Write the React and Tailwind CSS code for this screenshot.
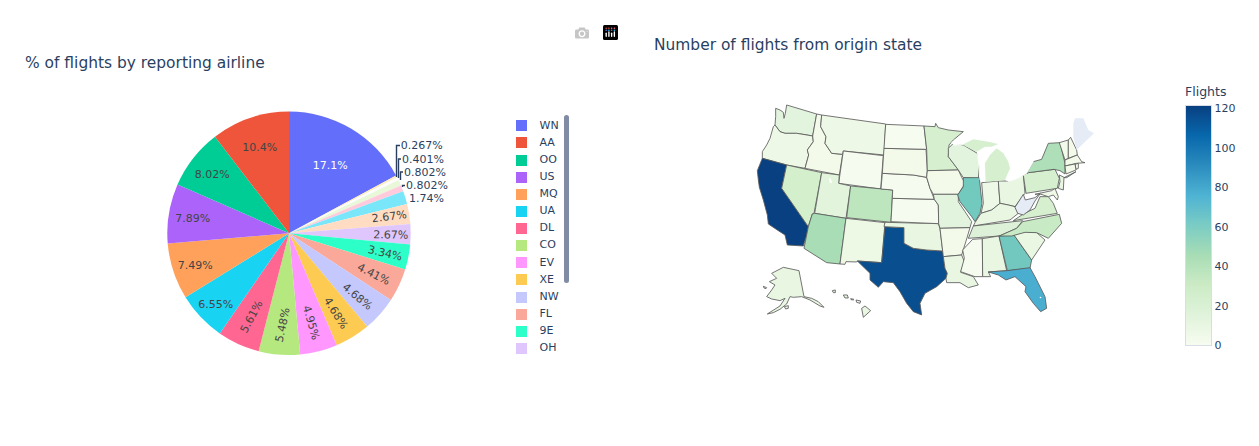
import React from "react";

const slices = [
  [17.1, "#636efa"], [0.267, "#ffecb8"], [0.401, "#fffdff"], [0.802, "#e9f8d8"], [0.802, "#ffcbdc"],
  [1.74, "#7ae6f9"], [2.67, "#ffdcc2"], [2.67, "#dfc6fd"], [3.34, "#2dffc8"], [4.41, "#f9a899"],
  [4.68, "#c4c8fd"], [4.68, "#fecb52"], [4.95, "#ff97ff"], [5.48, "#b6e880"], [5.61, "#ff6692"],
  [6.55, "#19d3f3"], [7.49, "#ffa15a"], [7.89, "#ab63fa"], [8.02, "#00cc96"], [10.4, "#ef553b"],
];
const total = slices.reduce((a, s) => a + s[0], 0);
const CX = 289, CY = 233.3, R = 121.7;
let acc = 0;
const arcs = slices.map(([v, c]) => {
  const a0 = (acc / total) * 2 * Math.PI;
  acc += v;
  const a1 = (acc / total) * 2 * Math.PI;
  const p = (a) => `${(CX + R * Math.sin(a)).toFixed(2)} ${(CY - R * Math.cos(a)).toFixed(2)}`;
  return { d: `M${CX} ${CY}L${p(a0)}A${R} ${R} 0 ${a1 - a0 > Math.PI ? 1 : 0} 1 ${p(a1)}Z`, c };
});

const inside = [
  ["17.1%", 330.3, 165, 0, "#fff"], ["10.4%", 259.7, 147.3, 0], ["8.02%", 212.3, 174, 0], ["7.89%", 192.7, 218, 0],
  ["7.49%", 195.3, 265, 0], ["6.55%", 215.7, 304, 0], ["5.61%", 251.7, 316.7, -62], ["5.48%", 282.7, 325, -78],
  ["4.95%", 311, 322.7, 74], ["4.68%", 335.7, 313.3, 58], ["4.68%", 357.3, 296.7, 40], ["4.41%", 373.7, 274.3, 27],
  ["3.34%", 385, 253.3, 13], ["2.67%", 390.7, 235, 1], ["2.67%", 389.3, 216.7, -7],
];
const outside = [
  ["0.267%", 400.7, 145.7], ["0.401%", 402, 159], ["0.802%", 404, 172], ["0.802%", 406, 185], ["1.74%", 409, 198.3],
];
const leaders = ["M396.5 177V145.5H400", "M398.5 178V159H401", "M400.5 180V172H403", "M402.5 187V185.5H405"];

const legend = [
  ["WN", "bg-[#636efa]"], ["AA", "bg-[#ef553b]"], ["OO", "bg-[#00cc96]"], ["US", "bg-[#ab63fa]"], ["MQ", "bg-[#ffa15a]"],
  ["UA", "bg-[#19d3f3]"], ["DL", "bg-[#ff6692]"], ["CO", "bg-[#b6e880]"], ["EV", "bg-[#ff97ff]"], ["XE", "bg-[#fecb52]"],
  ["NW", "bg-[#c4c8fd]"], ["FL", "bg-[#f9a899]"], ["9E", "bg-[#2dffc8]"], ["OH", "bg-[#dfc6fd]"],
];

const west = [
  ["#e3f4de", "137,25 150,30 160,37 162,55 166,40 170,15 260,42 248,108 225,104 200,100 165,100 150,95 135,75 137,50"],
  ["#eef8e6", "135,75 150,95 165,100 200,100 225,104 248,108 250,125 232,150 236,165 225,205 170,195 97,175 97,155 110,135 120,115 130,80"],
  ["#084081", "97,175 170,195 155,265 235,380 230,405 220,438 172,435 165,405 145,392 115,372 112,345 100,300 88,262 85,240 82,212"],
  ["#d3efcc", "170,195 275,218 252,340 247,342 235,380 155,265"],
  ["#f3faea", "260,42 275,45 272,80 288,110 285,130 305,160 338,163 328,225 225,205 236,165 232,150 250,125 248,108"],
  ["#eef8e6", "275,45 467,72 462,165 340,153 338,163 305,160 285,130 288,110 272,80"],
  ["#f5fbee", "340,153 460,167 452,267 326,250"],
  ["#e2f4dc", "275,218 328,225 326,250 362,258 348,355 254,340"],
  ["#bde5be", "362,258 488,270 483,367 350,353"],
  ["#a8ddb5", "254,340 348,355 330,492 290,488 222,445 235,380 247,342"],
  ["#edf8e5", "348,355 465,368 455,488 382,483 380,486 348,485 345,493 330,492"],
  ["#e8f6e2", "160,502 207,512 222,590 245,595 265,605 282,622 270,618 240,600 215,590 190,592 180,590 170,612 150,628 130,638 112,642 150,618 165,595 150,602 125,597 110,590 125,570 135,555 118,545 140,535 125,520"],
  ["#e8f6e2", "100,559 110,563 108,566 102,564"],
  ["#e8f6e2", "163,620 175,617 175,625 167,627"],
  ["#e8f6e2", "395,625 405,618 422,632 400,652"],
  ["#e8f6e2", "307,572 316,570 316,578 310,578"],
  ["#e8f6e2", "340,585 352,585 355,594 345,594"],
  ["#e8f6e2", "362,596 372,598 370,600 363,599"],
  ["#e8f6e2", "378,600 392,603 390,610 380,607"],
];
const mid = [
  ["#094f90", "45,335 102,338 102,385 130,400 170,405 218,408 225,460 232,475 228,490 200,515 165,535 150,565 155,600 130,590 110,565 90,530 70,503 40,500 25,517 0,495 0,475 -38,438 35,443"],
  ["#e8f6e2", "45,322 205,326 210,340 218,408 170,405 130,400 102,385 102,338 42,335"],
  ["#f5fbee", "67,250 193,253 205,270 206,326 63,320"],
  ["#f5fbee", "37,175 130,180 170,187 180,220 193,253 67,250 68,225 33,222"],
  ["#f3faea", "42,100 168,103 172,165 170,187 130,180 37,175"],
  ["#f7fcf0", "47,28 162,33 170,103 42,100"],
  ["#d5efcf", "162,33 195,35 197,25 205,38 235,45 280,50 250,75 237,90 235,125 262,160 265,165 172,167 170,103"],
  ["#f3faea", "172,167 265,165 275,187 285,205 265,238 190,238 180,220 170,187"],
  ["#e3f4de", "190,238 265,238 265,260 285,290 305,320 300,338 210,340 206,326 205,270 193,253"],
  ["#f3faea", "210,340 300,338 290,372 275,420 220,425 218,408"],
  ["#e8f6e2", "220,425 275,420 283,440 272,472 310,485 325,510 295,518 270,503 230,503 228,490 232,475 225,460"],
];
const east = [
  ["#e3f4de", "85,170 85,145 100,130 130,135 172,160 180,185 175,235 130,233 115,210"],
  ["#72c9be", "130,233 178,233 186,310 180,340 165,365 155,350 120,305 113,285 130,260"],
  ["#eef8e6", "185,248 235,243 240,310 215,330 183,340 190,310"],
  ["#e8f6e2", "235,243 270,243 310,225 315,280 285,320 265,315 240,310"],
  ["#e8f6e2", "165,368 183,340 215,330 240,310 265,315 285,320 295,340 270,360 160,378"],
  ["#dcf1d7", "145,415 160,378 308,362 290,385 238,408"],
  ["#f5fbee", "158,418 187,416 188,530 165,530 122,515 133,475 128,450"],
  ["#e8f6e2", "187,416 237,408 260,512 205,516 212,530 188,530"],
  ["#72c7be", "237,408 282,405 335,480 330,505 262,512"],
  ["#49aed0", "205,516 262,512 330,503 345,530 375,590 380,625 362,635 340,610 315,575 318,560 285,530 258,540 235,525"],
  ["#eaf7e3", "282,405 315,395 350,398 375,420 335,480"],
  ["#c8eac5", "290,385 308,365 418,343 425,370 385,415 350,398 315,397 275,408 238,408"],
  ["#d5efcf", "280,362 310,342 345,325 360,290 385,290 400,310 412,340"],
  ["#e5ecf6", "285,322 310,283 316,300 345,293 362,279 345,303 330,330 310,345 293,340"],
  ["#f0f9e8", "345,283 395,272 405,265 415,290 412,300 400,285 385,290 360,282"],
  ["#d5efcf", "310,225 325,218 405,208 418,235 412,265 318,280"],
  ["#aedfb8", "320,220 340,185 365,178 385,130 420,128 435,190 435,222 420,212 402,208 325,218"],
  ["#e8f6e2", "418,225 432,232 430,270 415,265 420,245"],
  ["#f3faea", "418,128 445,120 445,175 435,180"],
  ["#f3faea", "445,120 452,112 470,150 472,165 445,175"],
  ["#e5ecf6", "460,70 465,55 490,55 505,90 522,100 470,150 460,110", "none"],
  ["#f3faea", "435,180 472,165 485,185 495,188 470,190 435,198"],
  ["#f3faea", "465,193 475,190 475,205 468,208"],
  ["#f3faea", "435,198 465,192 468,210 438,222"],
  ["#aedfb8", "432,233 468,215 440,233"],
  ["#ffffff", "95,128 130,100 150,92 190,110 240,130 205,123 160,116 130,133 103,135", "#fff"],
  ["#ffffff", "172,160 180,150 205,140 215,143 198,185 194,245 180,240 178,200", "#fff"],
  ["#ffffff", "232,132 250,120 300,150 340,185 320,220 300,232 268,245 258,240 272,205 265,180 248,155", "#fff"],
  ["#d5efcf", "130,133 160,118 205,125 235,132 215,140 195,140 170,155 135,138", "none"],
  ["#d5efcf", "197,245 195,190 210,165 230,145 250,160 265,185 270,205 255,240 235,243", "none"],
];

function Frame({ x, y, items }) {
  return (
    <g transform={`translate(${x} ${y}) scale(0.3333)`} stroke="#5a5a5a" strokeWidth="2.5" strokeLinejoin="round">
      {items.map(([c, p, s], i) => <polygon key={i} points={p} fill={c} stroke={s} />)}
    </g>
  );
}

function PlotlyLogo() {
  const bars = [[28, 66, 26], [52, 56, 36], [76, 66, 26], [100, 56, 36]];
  return (
    <svg width="15" height="15" viewBox="0 0 132 132">
      <rect width="132" height="132" rx="14" fill="#000" />
      {[28, 52, 76, 100].map((x, i) => <circle key={x} cx={x} cy="28" r="7" fill={i < 2 ? "#ef553b" : "#ff6692"} />)}
      {[28, 52, 76, 100].map((x, i) => <circle key={x} cx={x} cy="46" r="7" fill={i % 2 ? "#19d3f3" : "#636efa"} />)}
      {bars.map(([x, y, h]) => <rect key={x} x={x - 6} y={y} width="12" height={h + 14} rx="6" fill="#fff" />)}
    </svg>
  );
}

const cameraPath = "m500 450c-83 0-150-67-150-150 0-83 67-150 150-150 83 0 150 67 150 150 0 83-67 150-150 150z m400 150h-120c-16 0-34 13-39 29l-31 93c-6 15-23 28-40 28h-340c-16 0-34-13-39-28l-31-94c-6-15-23-28-40-28h-120c-55 0-100-45-100-100v-450c0-55 45-100 100-100h800c55 0 100 45 100 100v450c0 55-45 100-100 100z m-400-550c-138 0-250 112-250 250 0 138 112 250 250 250 138 0 250-112 250-250 0-138-112-250-250-250z m365 380c-19 0-35 16-35 35 0 19 16 35 35 35 19 0 35-16 35-35 0-19-16-35-35-35z";

export default function App() {
  return (
    <div className="flex h-[446px] w-full overflow-hidden bg-white font-['DejaVu_Sans','Liberation_Sans',sans-serif] text-[#2a3f5f]">
      <div className="w-[570px] shrink-0 pt-[53px]">
        <div className="pl-[25px] text-[15.45px] leading-[20px]">% of flights by reporting airline</div>
        <div className="mt-[27px] flex items-start">
          <svg width="510" height="300" viewBox="0 100 510 300" className="block shrink-0" fontSize="11">
            {arcs.map((a, i) => <path key={i} d={a.d} fill={a.c} />)}
            {inside.map(([t, x, y, r, c], i) => (
              <text key={i} x={x} y={y} fill={c || "#444"} textAnchor="middle" dominantBaseline="central" transform={`rotate(${r} ${x} ${y})`}>{t}</text>
            ))}
            {leaders.map((d) => <path key={d} d={d} fill="none" stroke="#2a3f5f" strokeWidth="1.4" />)}
            {outside.map(([t, x, y], i) => (
              <text key={i} x={x} y={y} fill="#2a3f5f" dominantBaseline="central">{t}</text>
            ))}
          </svg>
          <div className="ml-[5.5px] mt-[17.2px] flex w-[48px] shrink-0 flex-col">
            {legend.map(([n, c]) => (
              <div key={n} className="flex h-[17.13px] items-center gap-[13px] text-[11px]">
                <span className={`h-[11px] w-[11px] shrink-0 ${c}`} />
                <span>{n}</span>
              </div>
            ))}
          </div>
          <div className="mt-[15px] h-[168px] w-[5px] shrink-0 rounded-[3px] bg-[#808ba4]" />
        </div>
      </div>

      <div className="flex w-[84px] shrink-0 items-start pl-[5px] pt-[25px]">
        <svg width="14" height="14" viewBox="0 0 1000 1000" className="mt-[0.5px]">
          <path d={cameraPath} fill="#c6c6c6" fillRule="evenodd" transform="matrix(1 0 0 -1 0 850)" />
        </svg>
        <div className="ml-[14px]"><PlotlyLogo /></div>
      </div>

      <div className="min-w-0 flex-1 pt-[35px]">
        <div className="text-[15.45px] leading-[20px]">Number of flights from origin state</div>
        <div className="mt-[29px] flex items-start">
          <svg width="531" height="262" viewBox="654 84 531 262" className="block shrink-0">
            <Frame x={730} y={100} items={west} />
            <Frame x={870} y={115} items={mid} />
            <Frame x={920} y={100} items={east} />
            <polygon points="829,178 831,179 832,183 830,183" fill="#fff" />
            <circle cx="1040.5" cy="297.5" r="0.8" fill="#fff" />
          </svg>
          <div className="flex flex-col">
            <div className="h-[16px] text-[12.5px] leading-[16px]">Flights</div>
            <div className="mt-[5px] flex items-start">
              <div className="h-[241px] w-[27px] shrink-0 border border-[#d8dde6] bg-[linear-gradient(to_top,#f7fcf0_0%,#e0f3db_12.5%,#ccebc5_25%,#a8ddb5_37.5%,#7bccc4_50%,#4eb3d3_62.5%,#2b8cbe_75%,#0868ac_87.5%,#084081_100%)]" />
              <div className="ml-[2.5px] mt-[-2px] flex h-[249px] flex-col justify-between text-[11px] leading-[12px]">
                {["120", "100", "80", "60", "40", "20", "0"].map((t) => <span key={t}>{t}</span>)}
              </div>
            </div>
          </div>
        </div>
      </div>
    </div>
  );
}
